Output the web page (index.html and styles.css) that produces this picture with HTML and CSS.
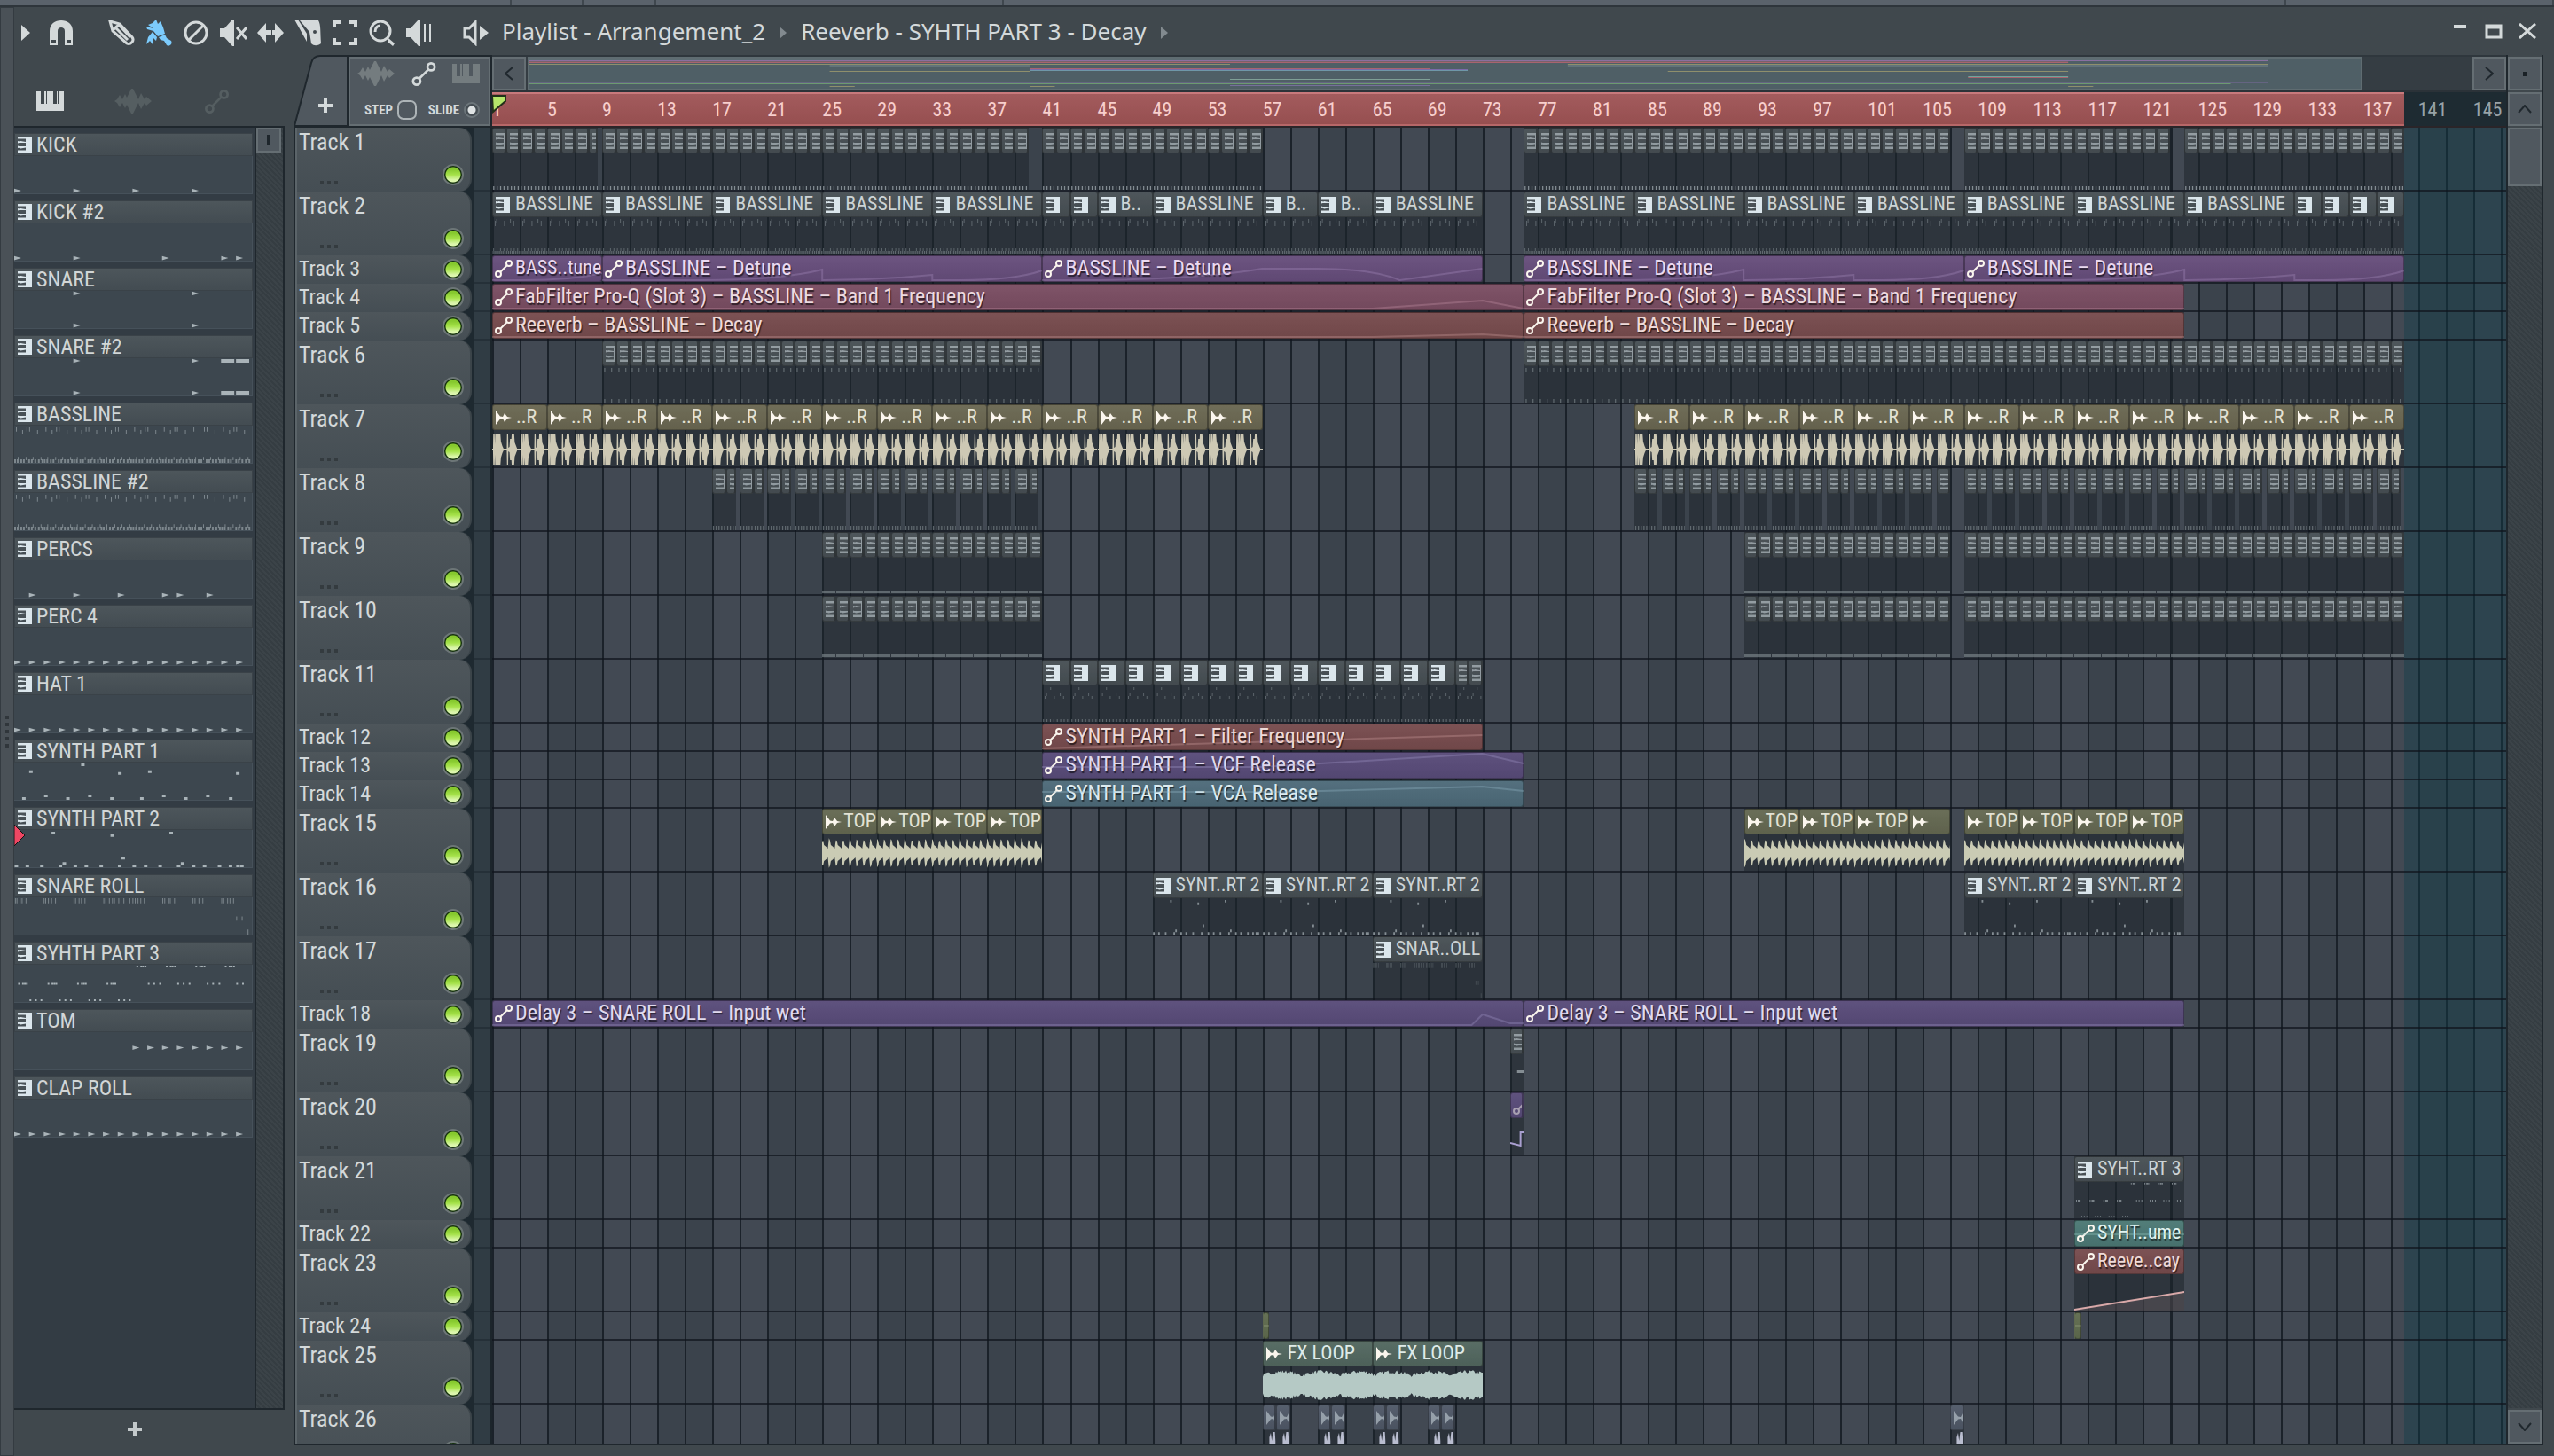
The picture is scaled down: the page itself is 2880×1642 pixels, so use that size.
FILE: index.html
```html
<!DOCTYPE html>
<html lang="en">
<head>
  <meta charset="UTF-8" />
  <meta name="viewport" content="width=device-width, initial-scale=1.0" />
  <title>Playlist - Arrangement_2</title>
  <link rel="stylesheet" href="styles.css">
</head>
<body>

  <!-- shared icons -->
  <svg class="defs" aria-hidden="true">
    <symbol id="i-keys" viewBox="0 0 16 18">
      <path d="M0 0H16V18H0V15.500H9V12.500L3 13.500L0 11.500V11H9V7H0V6.500L3 5.500V5L9 6V2.500H0Z" />
      <path d="M0 5L5 6L0 7.500ZM0 10.500L5 12L0 13Z" />
    </symbol>
    <symbol id="i-piano" viewBox="0 0 31 22">
      <path d="M0 0H5V14H9V0H11V14H12V0H19V14H23V0H24V14H25V0H31V22H0Z" />
    </symbol>
    <symbol id="i-auto" viewBox="0 0 20 20">
      <path class="ln" d="M6 14L14 6" />
      <circle class="ln" cx="4" cy="16" r="3" />
      <circle class="ln" cx="16" cy="4" r="3" />
    </symbol>
    <symbol id="i-audio" viewBox="0 0 18 16">
      <path d="M0 0L5 6.500L8 7L10 3L13 7L18 8L13 9L10 13L8 9L5 9.500L0 16Z" />
    </symbol>
    <symbol id="i-wave" viewBox="0 0 42 28">
      <path d="M0 14L3 12L6 7L9 12L12 6L14 10L19 0H21L24 6L27 12L30 5L34 12L36 9L42 14L36 19L34 16L30 23L27 16L24 22L21 28H19L14 18L12 22L9 16L6 21L3 16Z" />
    </symbol>
  </svg>

  <div class="strip"><i></i><i></i><i></i><i></i><i></i><i></i></div>

  <div class="window">
    <div class="edge"><span></span></div>

    <main class="main">
      <header class="toolbar">
        <button class="tb small" aria-label="Menu"><svg viewBox="0 0 10 18" width="10" height="18"><path d="M0 0L10 9L0 18Z" /></svg></button>
        <button class="tb" aria-label="Snap"><svg viewBox="0 0 28 30" width="28" height="30"><path d="M1 29V13C1 5 7 1 14 1S27 5 27 13V29H18V13C18 10 16 9 14 9S10 10 10 13V29Z" /><path class="dark" d="M3 23H8V27H3ZM20 23H25V27H20Z" /></svg></button>
        <div class="tools">
          <button class="tb" aria-label="Draw"><svg viewBox="0 0 30 30" width="30" height="30"><path class="st" d="M2 2L13 5L27 20C30 24 25 29 21 27L5 13Z M12 6L25 20 M8 9L22 23 M5 12L12 6" /></svg></button>
          <button class="tb active" aria-label="Paint"><svg viewBox="0 0 30 30" width="30" height="30"><path d="M8 4L12 0L14 5L17 2L20 9L22 16L14 19L9 13L2 11L1 8L9 10L3 6Z M8 14L13 20L12 24L9 21L8 28L5 24L1 28L3 20Z M15 20L22 17L24 21L29 24C31 28 27 31 24 29L21 24L17 23Z" /></svg></button>
          <button class="tb" aria-label="Delete"><svg viewBox="0 0 30 30" width="30" height="30"><circle class="st" cx="15" cy="15" r="12" /><path class="st" d="M7 23L23 7" /></svg></button>
          <button class="tb" aria-label="Mute"><svg viewBox="0 0 32 30" width="32" height="30"><path d="M1 10H6L15 0H17V30H15L6 20H1Z" /><path class="st" d="M20 9L31 22M31 9L20 22" /></svg></button>
          <button class="tb" aria-label="Slip"><svg viewBox="0 0 30 26" width="30" height="26"><path d="M0 13L10 2V10H14V16H10V24Z M30 13L20 2V10H16V16H20V24Z M13 10H17V16H13Z" /></svg></button>
          <button class="tb" aria-label="Slice"><svg viewBox="0 0 30 30" width="30" height="30"><path d="M0 0H4L14 16V25Z M6 1H27C30 6 29 14 30 27C26 30 22 30 19 27L17 14Z" /><circle class="dark" cx="23" cy="14" r="2" /></svg></button>
          <button class="tb" aria-label="Select"><svg viewBox="0 0 28 30" width="28" height="30"><path class="st thick" d="M2 9V3H9M19 3H26V9M26 21V27H19M9 27H2V21" /></svg></button>
          <button class="tb" aria-label="Zoom"><svg viewBox="0 0 30 30" width="30" height="30"><circle class="st" cx="13" cy="13" r="11" /><path class="st" d="M7 14C7 9 10 7 13 7" /><path d="M22 21L29 27L27 30L21 25Z" /></svg></button>
          <button class="tb" aria-label="Playback"><svg viewBox="0 0 30 30" width="30" height="30"><path d="M0 10H5L14 0H16V30H14L5 20H0Z M20 5H22V25H20Z M26 5H28V25H26Z" /></svg></button>
        </div>
        <button class="tb" aria-label="Preview"><svg viewBox="0 0 30 30" width="30" height="30"><path class="st" d="M2 10H7L14 3V27L7 20H2Z" /><path d="M19 7L29 15L19 23Z" /></svg></button>
        <nav class="crumbs">
          <button>Playlist - Arrangement_2</button>
          <svg viewBox="0 0 8 14" width="8" height="14"><path d="M0 0L8 7L0 14Z" /></svg>
          <button>Reeverb - SYHTH PART 3 - Decay</button>
          <svg viewBox="0 0 8 14" width="8" height="14"><path d="M0 0L8 7L0 14Z" /></svg>
        </nav>
        <div class="winbtns">
          <button aria-label="Minimize"><svg viewBox="0 0 20 18" width="20" height="18"><path d="M3 2H17V6H3Z" /></svg></button>
          <button aria-label="Maximize"><svg viewBox="0 0 20 18" width="20" height="18"><path class="st" d="M2 3H18V16H2ZM2 5H18" /></svg></button>
          <button aria-label="Close"><svg viewBox="0 0 20 18" width="20" height="18"><path class="st" d="M1 1L19 17M19 1L1 17" /></svg></button>
        </div>
      </header>

      <div class="content">
        <aside class="browser">
          <div class="tabs">
            <button class="on" aria-label="Patterns"><svg width="31" height="22"><use href="#i-piano" /></svg></button>
            <button aria-label="Audio"><svg width="42" height="28"><use href="#i-wave" /></svg></button>
            <button aria-label="Automation"><svg width="33" height="27"><use href="#i-auto" /></svg></button>
          </div>
          <div class="picker">
            <div class="patterns" id="patterns"></div>
            <div class="bar"><button aria-label="Scroll"><i></i></button></div>
          </div>
          <button class="add" aria-label="Add pattern"><svg viewBox="0 0 16 16" width="16" height="16"><path d="M6 0H10V6H16V10H10V16H6V10H0V6H6Z" /></svg></button>
        </aside>

        <section class="playlist">
          <div class="left">
            <div class="corner">
              <button class="newtrack" aria-label="Add track">
                <svg class="shape" viewBox="0 0 62 80" preserveAspectRatio="none"><path d="M1 80L20 9Q22 1 30 1H61V80Z" /></svg>
                <svg class="plus" viewBox="0 0 16 16" width="16" height="16"><path d="M6 0H10V6H16V10H10V16H6V10H0V6H6Z" /></svg>
              </button>
              <div class="options">
                <div class="kinds">
                  <button aria-label="Audio clips"><svg width="42" height="28"><use href="#i-wave" /></svg></button>
                  <button class="on" aria-label="Automation clips"><svg width="32" height="27"><use href="#i-auto" /></svg></button>
                  <button aria-label="Pattern clips"><svg width="31" height="22"><use href="#i-piano" /></svg></button>
                </div>
                <div class="flags">
                  <label>STEP<input type="checkbox" class="step"></label>
                  <label>SLIDE<input type="radio" class="slide" checked></label>
                </div>
              </div>
            </div>
            <div class="tracks" id="tracks"></div>
          </div>

          <div class="center">
            <div class="overview">
              <button class="nav" aria-label="Scroll left"><svg viewBox="0 0 10 16" width="10" height="16"><path class="st" d="M9 1L1 8L9 15" /></svg></button>
              <div class="map" id="map"></div>
              <div class="rest"></div>
              <button class="nav" aria-label="Scroll right"><svg viewBox="0 0 10 16" width="10" height="16"><path class="st" d="M1 1L9 8L1 15" /></svg></button>
            </div>
            <div class="ruler" id="ruler"></div>
            <div class="lanes" id="lanes"></div>
          </div>

          <div class="right">
            <button class="nav dot" aria-label="Menu"><i></i></button>
            <button class="nav" aria-label="Scroll up"><svg viewBox="0 0 16 10" width="16" height="10"><path class="st" d="M1 9L8 1L15 9" /></svg></button>
            <div class="vbar"><div class="thumb"></div></div>
            <button class="nav" aria-label="Scroll down"><svg viewBox="0 0 16 10" width="16" height="10"><path class="st" d="M1 1L8 9L15 1" /></svg></button>
          </div>
        </section>
      </div>
    </main>
  </div>

  <script src="script.js"></script>
</body>
</html>
```

FILE: styles.css
```css
:root {
  --fondo: #40484d;
  --panel: #50585f;
  --panel-line: #656e73;
  --dark: #1f272d;
  --text: #d4d9da;
  --font: "Roboto Condensed", "Liberation Sans Narrow", "Noto Sans", sans-serif;
  --bars: 146.4;
}

* {
  margin: 0;
  padding: 0;
  box-sizing: border-box;
}

body {
  background: var(--fondo);
  color: var(--text);
  font-family: var(--font);
  height: 100vh;
  display: flex;
  flex-direction: column;
  overflow: hidden;
}

button {
  background: none;
  border: none;
  color: inherit;
  font: inherit;
  display: flex;
  align-items: center;
  justify-content: center;
}

svg {
  display: block;
  fill: currentColor;
}

.defs {
  position: absolute;
  width: 0;
  height: 0;
}

.st, .ln {
  fill: none;
  stroke: currentColor;
  stroke-width: 3;
}

.ln { stroke-width: 2; }
.thick { stroke-width: 4; }
.dark { fill: var(--fondo); }

/* top strip */
.strip {
  height: 8px;
  background: #5a626b;
  border-bottom: 2px solid #2e353b;
  display: flex;
  flex: none;
}

.strip i { border-right: 2px solid #3f474e; }
.strip i:nth-child(1) { flex: 577; }
.strip i:nth-child(2) { flex: 80; }
.strip i:nth-child(3) { flex: 80; }
.strip i:nth-child(4) { flex: 392; }
.strip i:nth-child(5) { flex: 1450; }
.strip i:nth-child(6) { flex: 301; }

.window {
  flex: 1;
  display: flex;
  min-height: 0;
}

.edge {
  width: 16px;
  background: #4a5157;
  border: 1px solid #343b41;
  display: flex;
  align-items: center;
  justify-content: center;
}

.edge span {
  width: 4px;
  height: 36px;
  background: repeating-linear-gradient(#30363b 0 4px, transparent 4px 8px);
}

.main {
  flex: 1;
  min-width: 0;
  display: flex;
  flex-direction: column;
}

/* toolbar */
.toolbar {
  height: 54px;
  flex: none;
  display: flex;
  align-items: center;
}

.tb { width: 42px; height: 40px; margin-top: 3px; }
.tb.small { width: 32px; padding-right: 6px; }
.tb.active { color: #7ccbfc; }
.tools { display: flex; margin: 0 22px 0 26px; }

.crumbs {
  display: flex;
  align-items: center;
  gap: 16px;
  margin-left: 8px;
  font-family: "Noto Sans", sans-serif;
  font-size: 26px;
  line-height: 32px;
}

.crumbs svg { color: #828a8f; margin-top: 3px; }

.winbtns {
  margin-left: auto;
  margin-right: 20px;
  display: flex;
  gap: 18px;
}

.content {
  flex: 1;
  display: flex;
  min-height: 0;
}

/* pattern picker */
.browser {
  width: 305px;
  margin-right: 10px;
  padding-bottom: 8px;
  display: flex;
  flex-direction: column;
}

.tabs {
  height: 80px;
  display: flex;
  align-items: center;
  padding: 24px 60px 0 25px;
  justify-content: space-between;
  color: #555e61;
}

.tabs .on, .kinds .on { color: var(--text); }

.picker {
  flex: 1;
  min-height: 0;
  display: flex;
  border: 2px solid var(--dark);
  border-left: none;
  background: #333c44;
}

.patterns {
  flex: 1;
  min-width: 0;
  display: flex;
  flex-direction: column;
  gap: 6px;
  padding: 6px 2px 0 0;
  border-right: 2px solid var(--dark);
}

.pattern {
  height: 70px;
  position: relative;
}

.pattern h3 {
  height: 26px;
  background: linear-gradient(#4d565b, #434c52);
  border: 1px solid #3a4248;
  font-size: 24px;
  line-height: 20px;
  font-weight: normal;
  display: flex;
  align-items: center;
  gap: 5px;
  padding-left: 3px;
  color: #d2d6d6;
}

.pattern h3 svg, .clip h4 svg { flex: none; }
.pattern h3 svg { color: #dbe6ec; }

.preview {
  width: 100%;
  height: 43px;
  background: #3d474f;
  border-bottom: 1px solid #46515a;
  border-right: 1px solid #46515a;
  color: #a9b3b8;
}

.pattern .mark {
  position: absolute;
  left: 0;
  top: 20px;
  color: #ee4763;
}

.bar {
  width: 30px;
  background: repeating-linear-gradient(45deg, #3b4348 0 2px, #353d42 2px 4px);
}

.bar button {
  width: 28px;
  height: 28px;
  background: var(--panel);
  border: 2px solid var(--panel-line);
}

.bar i { width: 4px; height: 12px; background: #1e262c; }
.add { width: 271px; height: 44px; color: #c3c9cb; }

/* playlist */
.playlist {
  flex: 1;
  min-width: 0;
  margin: 0 12px 12px 0;
  display: flex;
}

.left {
  width: 224px;
  display: flex;
  flex-direction: column;
  border-bottom: 2px solid var(--dark);
}

.corner {
  height: 82px;
  flex: none;
  display: flex;
  border-bottom: 2px solid var(--dark);
}

.newtrack {
  width: 62px;
  position: relative;
}

.newtrack .shape {
  position: absolute;
  width: 100%;
  height: 100%;
  fill: var(--panel);
  stroke: var(--dark);
  stroke-width: 2;
}

.newtrack .plus { position: relative; margin: 34px 0 0 10px; }

.options {
  flex: 1;
  margin-top: 2px;
  background: var(--panel);
  border: 2px solid var(--panel-line);
  outline: 2px solid var(--dark);
  margin-right: 2px;
  padding: 3px 10px 0 8px;
}

.kinds {
  display: flex;
  align-items: center;
  justify-content: space-between;
  color: #747c7f;
}

.flags {
  display: flex;
  justify-content: space-between;
  padding-left: 8px;
  margin-top: 16px;
  font-size: 15px;
  font-weight: bold;
}

.flags label { display: flex; align-items: center; gap: 5px; }
.flags input { appearance: none; }

.step {
  width: 22px;
  height: 22px;
  border: 2px solid #adb4b7;
  border-radius: 7px;
}

.slide {
  width: 18px;
  height: 18px;
  border-radius: 50%;
  border: 2px solid #6c757a;
  background: radial-gradient(#dfe3e4 0 4px, #454d53 5px);
}

.tracks {
  flex: 1;
  min-height: 0;
  overflow: hidden;
  background: #1e2930;
  border-left: 2px solid var(--dark);
}

.track {
  height: 72px;
  display: flex;
}

.track.low { height: 32px; }

.head {
  flex: 1;
  position: relative;
  display: flex;
  justify-content: space-between;
  background: linear-gradient(#4e565b, #454e54);
  border-left: 2px solid #5b6469;
  border-right: 2px solid #3b4449;
  border-radius: 0 14px 14px 0;
  padding: 0 7px 0 2px;
  font-size: 26px;
  line-height: 32px;
}

.low .head { font-size: 24px; line-height: 30px; }

.track .gutter {
  width: 19px;
  margin-left: 2px;
  background: #303c44;
  border-bottom: 2px solid #253038;
}

.track::after {
  content: "";
  width: 2px;
  background: #1c252b;
}

.head input {
  appearance: none;
  width: 24px;
  height: 24px;
  margin-top: 41px;
  border-radius: 50%;
  border: 2px solid #6d7677;
  background: radial-gradient(circle at 50% 50%, transparent 0 8px, #14300c 9px),
    linear-gradient(#86c92e 20%, #a5e24a 50%, #dcf6ad 80%);
}

.low .head input { margin-top: 4px; }

.head .more {
  position: absolute;
  left: 26px;
  bottom: 8px;
  width: 20px;
  height: 4px;
  background: repeating-linear-gradient(90deg, #343b3f 0 4px, transparent 4px 8px);
}

.low .more { display: none; }

.center {
  flex: 1;
  min-width: 0;
  display: flex;
  flex-direction: column;
  border-bottom: 2px solid var(--dark);
}

.overview {
  height: 42px;
  flex: none;
  border-top: 2px solid #2f373d;
  border-bottom: 2px solid #2b3238;
  display: flex;
  background: #353d43;
}

.nav {
  width: 38px;
  height: 38px;
  flex: none;
  background: var(--panel);
  border: 2px solid var(--panel-line);
  color: #20282e;
}

.nav .st { stroke-width: 2; }

.map {
  flex: 2069;
  margin-left: 2px;
  background: #4f5f66;
  border: 2px solid #5f6c71;
}

.map svg { width: 100%; height: 100%; }
.rest { flex: 124; }

.ruler {
  height: 40px;
  flex: none;
  position: relative;
  overflow: hidden;
  background: #1e2b32;
  border-bottom: 2px solid #2a2529;
  font-size: 22px;
  line-height: 40px;
  color: #98a3a8;
}

.song {
  position: absolute;
  left: 0;
  top: 0;
  bottom: 0;
  background: linear-gradient(#a35b5d, #964f50);
  border-top: 2px solid #c8797c;
  border-bottom: 2px solid #b76768;
}

.ruler span { position: absolute; top: 0; }
.ruler .in { color: #f8cfcd; }

.playhead {
  position: absolute;
  left: 0;
  top: 3px;
  color: #b5e66a;
}

.lanes {
  flex: 1;
  min-height: 0;
  position: relative;
  overflow: hidden;
  --bar: calc(100% / var(--bars));
  background:
    repeating-linear-gradient(90deg, #1b222a 0 2px, transparent 2px calc(2 * var(--bar))),
    repeating-linear-gradient(90deg, #424953 0 calc(4 * var(--bar)), #3b434c calc(4 * var(--bar)) calc(8 * var(--bar)));
}

.outside {
  position: absolute;
  top: 0;
  bottom: 0;
  right: 0;
  background: rgba(16, 62, 76, 0.4);
}

.lane {
  height: 72px;
  position: relative;
  border-bottom: 2px solid rgba(16, 20, 28, 0.7);
}

.lane.low { height: 32px; }

.clip {
  position: absolute;
  top: 0;
  bottom: 0;
  overflow: hidden;
  background: rgba(30, 38, 44, 0.56);
  --tint: #474f54;
  --ink: #ccd3d5;
}

.clip h4 {
  height: 29px;
  padding-left: 3px;
  display: flex;
  align-items: center;
  gap: 6px;
  overflow: hidden;
  background: var(--tint);
  background-image: linear-gradient(rgba(255, 255, 255, 0.04), rgba(0, 0, 0, 0.06));
  border: 1px solid rgba(0, 0, 0, 0.3);
  border-radius: 3px;
  font-size: 22px;
  line-height: 24px;
  font-weight: normal;
  white-space: nowrap;
  color: var(--ink);
}

.clip h4 span { margin-top: -2px; }
.clip h4 svg { color: #dbe6ec; }
.clip.auto h4 svg, .khaki h4 svg, .olive h4 svg, .green h4 svg { color: #fbf6ee; }
.clip.auto h4 { gap: 3px; padding-left: 2px; text-shadow: 1px 2px 1px rgba(0, 0, 0, 0.6); }
.clip.long h4 { font-size: 24px; }
.clip.khaki h4, .clip.olive h4 { gap: 2px; }
.clip.khaki h4 { gap: 5px; }
.clip.tiny h4 { border-right-width: 2px; }
.clip.tiny h4 svg { opacity: 0.5; }
.low .clip h4 { height: 30px; }

.clip .shape { width: 100%; height: 41px; color: var(--wave, #848d93); }

.low .clip .shape {
  position: absolute;
  left: 0;
  top: 0;
  height: 30px;
  opacity: 0.3;
}

.curve { fill: none; stroke: var(--wave); stroke-width: 2; vector-effect: non-scaling-stroke; }

.purple { --tint: #664d7b; --wave: #b095c8; --ink: #ead9f0; }
.rose { --tint: #7a4d62; --wave: #d09cb0; --ink: #eddae0; }
.brick { --tint: #774b4d; --wave: #d9a9a9; --ink: #eedad8; }
.violet { --tint: #584b79; --wave: #a99fd0; --ink: #e0daee; }
.blue { --tint: #4d6a79; --wave: #9cc0d0; --ink: #dcebf0; }
.teal { --tint: #4b7874; --wave: #9cd0ca; --ink: #e2f5f2; }
.khaki { --tint: #6a6751; --wave: #cdc8b4; --ink: #e4e2d4; }
.olive { --tint: #646851; --wave: #cacbb4; --ink: #e2e2d4; }
.moss { --tint: #5f6b4e; --wave: #9fac88; --ink: #9fac88; }
.green { --tint: #52675f; --wave: #b5c9c5; --ink: #dfebe8; }
.slate { --tint: #4f5867; --wave: #b9bdcf; --ink: #d0d4df; }

.right {
  width: 42px;
  padding: 2px 0 0;
  display: flex;
  flex-direction: column;
  border: 2px solid var(--dark);
  border-top: none;
  gap: 2px;
}

.dot i { width: 4px; height: 5px; background: #1a2126; }

.vbar {
  flex: 1;
  background: repeating-linear-gradient(45deg, #3b4348 0 2px, #353d42 2px 4px);
}

.thumb {
  height: 66px;
  background: var(--panel);
  border: 2px solid var(--panel-line);
}
```

FILE: script.js
```js
const BARS = 146.4;
const SONG = 139;
const pct = n => (n / BARS * 100) + "%";
const range = (a, b, s = 1) => { const r = []; for (let i = a; i < b; i += s) r.push(i); return r; };
let seed = 7;
const rnd = () => (seed = (seed * 16807) % 2147483647) / 2147483647;

const icon = (id, w, h) => `<svg width="${w}" height="${h}"><use href="#${id}" /></svg>`;
const KEYS = icon("i-keys", 16, 18);
const AUTO = icon("i-auto", 20, 20);
const AUDIO = icon("i-audio", 18, 16);

/* ---------- pattern picker ---------- */
const STEP = 16.8;
const tri = (steps, y) => steps.map(s => `M${s * STEP} ${y - 2.5}l8 2.5l-8 2.5z`).join("");
const box = (xs, y, w = 4, h = 3) => xs.map(x => `M${x} ${y}h${w}v${h}h${-w}z`).join("");
const z = xs => xs.map(x => (x - 36) / 2.24);
const rep = (xs, n, d) => range(0, n).flatMap(i => xs.map(x => x + i * d));
const all = range(0, 16);

const bassNotes = box(rep([2, 14, 17], 8, 33.6), 2, 1, 5) + box(rep([9, 26], 8, 33.6), 5, 1, 5)
  + box(rep([4, 13, 21, 30], 8, 33.6), 36, 1, 4) + box(rep([0, 3, 7, 10, 16, 19, 23, 27, 31], 8, 33.6), 39, 2, 4);
const part2 = box(z([131, 431]), 2) + box(z([281]), 5) + box(z([309]), 31) + box(z([159, 460]), 37)
  + box(z([37, 65, 102, 149, 187, 215, 253, 300, 337, 366, 403, 450, 488, 516, 554, 582, 601, 611]), 40);
const roll = box(z([38, 42, 50, 55, 65, 111, 115, 122, 130, 140, 187, 191, 200, 206, 215, 263, 268, 277, 285, 290, 301, 314, 329, 337, 343, 350, 357, 366, 413, 418, 428, 432, 443, 490, 495, 505, 515, 563, 568, 578, 584, 593]), 1, 1, 6)
  + box(z([601, 615]), 22, 1, 5) + box(z([630]), 37, 1, 6);
const part3 = box(z(rep([347, 357, 362, 368], 4, 75)), 1, 2, 2) + box(z(rep([46, 56, 61, 66], 4, 75)), 21, 2, 2)
  + box(z([376, 390, 405, 451, 465, 480, 526, 540, 556, 601, 616]), 21, 2, 2) + box(z(rep([75, 89, 103], 4, 75)), 40, 2, 2);

const patterns = [
  ["KICK", tri([0, 4, 8, 12], 40)],
  ["KICK #2", tri([0, 4, 10, 14, 15], 40)],
  ["SNARE", tri([4, 12], 3) + tri([4, 12], 40)],
  ["SNARE #2", tri([4, 12], 3) + tri([4, 12], 40) + box([235, 252], 1, 15, 4) + box([235, 252], 38, 15, 4)],
  ["BASSLINE", bassNotes],
  ["BASSLINE #2", bassNotes],
  ["PERCS", tri([1, 4, 7, 10, 11, 13], 40)],
  ["PERC 4", tri(all, 40)],
  ["HAT 1", tri(all, 40)],
  ["SYNTH PART 1", box([76], 1) + box([17, 152], 9) + box([118, 252], 11) + box([34, 84, 168, 218], 37) + box([9, 59, 109, 143, 193, 244], 40)],
  ["SYNTH PART 2", part2],
  ["SNARE ROLL", roll],
  ["SYHTH PART 3", part3],
  ["TOM", tri(range(8, 16), 18)],
  ["CLAP ROLL", tri(all, 40)]
];

document.getElementById("patterns").innerHTML = patterns.map(([name, d]) => `
  <div class="pattern"><h3>${KEYS}${name}</h3>
    <svg class="preview" viewBox="0 0 270 43" preserveAspectRatio="none"><path d="${d}" ${/BASS|ROLL/.test(name) && name[0] !== "C" ? 'opacity=".6"' : ""} /></svg>
    ${name === "SYNTH PART 2" ? '<svg class="mark" viewBox="0 0 13 24" width="13" height="24"><path d="M0 0L12 12L0 24Z" stroke="#1a1013" /></svg>' : ""}
  </div>`).join("");

/* ---------- clip drawings, 100 units per bar ---------- */
const ticks = (len, per, y, h, w = 8) => range(0, Math.round(len * per)).map(i => `M${(i + 0.3) * 100 / per} ${y}h${w}v${h}h${-w}z`).join("");
const svg = (len, inner, h = 41) => `<svg class="shape" viewBox="0 0 ${len * 100} ${h}" preserveAspectRatio="none">${inner}</svg>`;
const path = d => `<path d="${d}" />`;
const faint = d => `<path d="${d}" opacity=".6" />`;
const mirror = (pts, c) => "M" + pts.map(([x, y]) => `${x} ${c - y}`).join("L") + "L" + pts.slice().reverse().map(([x, y]) => `${x} ${c + y}`).join("L") + "Z";

const draw = {
  kick: n => svg(n, path(ticks(n, 4, 37, 4))),
  bass: n => svg(n, faint(ticks(n, 1, 2, 5, 6) + ticks(n, 1.5, 4, 6, 6) + ticks(n, 4, 35, 3, 6) + ticks(n, 8, 38, 3, 7))),
  hat: n => svg(n, faint(ticks(n, 2, 2, 4) + ticks(n, 2, 37, 4))),
  perc: n => svg(n, faint(ticks(n, 5, 36, 5))),
  line: n => svg(n, faint(`M0 37H${n * 100 - 3}V40H0Z`)),
  synth1: n => svg(n, faint(ticks(n, 0.5, 2, 3, 6) + ticks(n, 1, 9, 3, 6) + ticks(n, 1.5, 12, 3, 6) + ticks(n, 4, 38, 3, 7))),
  synth2: n => svg(2.7, path(part2), 43),
  roll: n => svg(2.7, faint(roll), 43),
  synth3: n => svg(2.7, path(part3), 43),
  /* two hits per pair of bars: a rolled one, then a clean one */
  loop: n => svg(n, path("M0 21H" + n * 100 + "V23H0Z") + path(range(0, n).map(i => {
    const p = i % 2
      ? [[6, 0], [8, 17], [16, 17], [18, 2], [26, 3], [30, 12], [40, 12], [42, 17], [60, 17], [64, 8], [74, 4], [84, 0]]
      : [[6, 0], [8, 17], [18, 17], [20, 6], [22, 17], [34, 17], [36, 9], [38, 17], [60, 17], [64, 9], [74, 4], [86, 0]];
    return mirror(p.map(([x, y]) => [i * 100 + x, y]), 22);
  }).join(""))),
  top: n => svg(n, path(mirror(range(0, n * 2).flatMap(i => [[i * 50, 13 + rnd() * 4], [i * 50 + 8, 14], [i * 50 + 14, 9], [i * 50 + 30, 7], [i * 50 + 42, 5]]).concat([[n * 100, 12]]), 21))),
  fx: n => svg(n, path(mirror(range(0, n * 100 + 1, 8).map(x => [x, 9 + Math.abs(Math.sin(x / 90)) * 4 + rnd() * 4]), 21))),
  hit: n => svg(n, path("M48 41V8L58 3L66 12L74 2H88L92 12V41Z")),
  note: n => svg(n, path("M50 18H100V21H50Z")),
  step: n => svg(n, '<path class="curve" d="M0 28L75 31V16H100" />'),
  ramp: n => svg(n, `<path d="M0 40L${n * 100} 20V41H0Z" opacity=".15" /><path class="curve" d="M0 40L${n * 100} 20" />`)
};
const curve = d => n => svg(n, `<path class="curve" d="${d}" />`, 30);
const flat = curve("M0 28H9000");

const detuneA = curve("M0 28H700Q1300 28 1600 16V28Q2000 28 2400 22V28H2600Q3000 28 3200 17");
const detuneB = curve("M0 28H400Q1200 26 1600 15H2000Q2400 15 2600 28L3200 15");

/* ---------- tracks ---------- */
const clips = (starts, len, o) => starts.map(s => ({ at: s, len, ...o }));
const mini = (a, b, d) => clips(range(a, b), 1, { icon: KEYS, tiny: 1, draw: d });
const key = (name, starts, len, d) => clips(starts, len, { name, icon: KEYS, draw: d });
const auto = (name, starts, len, tone, d = flat) => clips(starts, len, { name, icon: AUTO, tone: `auto ${len > 8 ? "long" : ""} ${tone}`, draw: d });
const wav = (name, starts, len, tone, d) => clips(starts, len, { name, icon: AUDIO, tone, draw: d });
const pairs = (a, b) => range(a, b, 2).flatMap(s => [
  ...mini(s, s + 1, draw.perc),
  ...(s + 1 < b ? clips([s + 1], 0.7, { icon: KEYS, tiny: 1, draw: draw.perc }) : [])
]);

const tracks = [
  { clips: [...mini(0, 7, draw.kick), ...clips([7], 0.7, { icon: KEYS, tiny: 1, draw: draw.kick }), ...mini(8, 39, draw.kick), ...mini(40, 56, draw.kick), ...mini(75, 106, draw.kick), ...mini(107, 122, draw.kick), ...mini(123, 139, draw.kick)] },
  { clips: [...key("BASSLINE", [...range(0, 40, 8), 48, 64, ...range(75, 131, 8)], 8, draw.bass), ...key("", [40, 42, 131, 133, 135, 137], 2, draw.bass), ...key("B..", [44, 56, 60], 4, draw.bass)] },
  { low: 1, clips: [...auto("BASS..tune", [0], 8, "purple", curve("M0 28H200Q600 28 800 20")), ...auto("BASSLINE – Detune", [8], 32, "purple", detuneA), ...auto("BASSLINE – Detune", [40], 32, "purple", detuneB), ...auto("BASSLINE – Detune", [75, 107], 32, "purple", detuneA)] },
  { low: 1, clips: [...auto("FabFilter Pro-Q (Slot 3) – BASSLINE – Band 1 Frequency", [0], 75, "rose", curve("M0 28H6400L7200 19L7500 28")), ...auto("FabFilter Pro-Q (Slot 3) – BASSLINE – Band 1 Frequency", [75], 48, "rose")] },
  { low: 1, clips: [...auto("Reeverb – BASSLINE – Decay", [0], 75, "brick", curve("M0 28H6400L7200 25L7500 28")), ...auto("Reeverb – BASSLINE – Decay", [75], 48, "brick")] },
  { clips: [...mini(8, 40, draw.hat), ...mini(75, 139, draw.hat)] },
  { clips: wav("..R", [...range(0, 56, 4), ...range(83, 139, 4)], 4, "khaki", draw.loop) },
  { clips: [...pairs(16, 40), ...pairs(83, 106), ...pairs(107, 139)] },
  { clips: [...mini(24, 40, draw.line), ...mini(91, 106, draw.line), ...mini(107, 139, draw.line)] },
  { clips: [...mini(24, 40, draw.line), ...mini(91, 106, draw.line), ...mini(107, 139, draw.line)] },
  { clips: [...key("", range(40, 70, 2), 2, draw.synth1), ...mini(70, 72, draw.synth1)] },
  { low: 1, clips: auto("SYNTH PART 1 – Filter Frequency", [40], 32, "brick", curve("M0 28L3200 13")) },
  { low: 1, clips: auto("SYNTH PART 1 – VCF Release", [40], 35, "violet", curve("M0 17H1600L3200 2L3500 13")) },
  { low: 1, clips: auto("SYNTH PART 1 – VCA Release", [40], 35, "blue", curve("M0 13H1800L3200 7L3500 12")) },
  { clips: [...wav("TOP", [...range(24, 40, 4), 91, 95, 99, ...range(107, 123, 4)], 4, "olive", draw.top), ...wav("", [103], 3, "olive", draw.top)] },
  { clips: key("SYNT..RT 2", [48, 56, 64, 107, 115], 8, draw.synth2) },
  { clips: key("SNAR..OLL", [64], 8, draw.roll) },
  { low: 1, clips: [...auto("Delay 3 – SNARE ROLL – Input wet", [0], 75, "violet", curve("M0 28H7120L7200 16L7400 26H7500")), ...auto("Delay 3 – SNARE ROLL – Input wet", [75], 48, "violet")] },
  { clips: mini(74, 75, draw.note) },
  { clips: clips([74], 1, { icon: AUTO, tone: "auto violet", tiny: 1, draw: draw.step }) },
  { clips: key("SYHT..RT 3", [115], 8, draw.synth3) },
  { low: 1, clips: auto("SYHT..ume", [115], 8, "teal", curve("M0 16H800")) },
  { clips: auto("Reeve..cay", [115], 8, "brick", draw.ramp) },
  { low: 1, clips: clips([56, 115], 0.5, { tone: "moss", draw: curve("M0 0V30M0 15H50") }) },
  { clips: wav("FX LOOP", [56, 64], 8, "green", draw.fx) },
  { clips: clips([56, 57, 60, 61, 64, 65, 68, 69, 106], 1, { icon: AUDIO, tone: "slate", tiny: 1, draw: draw.hit }) }
];

document.getElementById("tracks").innerHTML = tracks.map((t, i) => `
  <div class="track ${t.low ? "low" : ""}">
    <div class="head"><span>Track ${i + 1}</span><i class="more"></i><input type="checkbox" checked aria-label="Track ${i + 1} on"></div>
    <div class="gutter"></div>
  </div>`).join("");

document.getElementById("lanes").innerHTML = `<div class="outside" style="left:${pct(SONG)}"></div>` + tracks.map(t => `
  <div class="lane ${t.low ? "low" : ""}">${t.clips.map(c => `
    <div class="clip ${c.tone || ""} ${c.tiny ? "tiny" : ""}" style="left:${pct(c.at)};width:${pct(c.len)}">
      <h4>${c.icon || ""}${c.name ? `<span>${c.name}</span>` : ""}</h4>${c.draw(c.len)}</div>`).join("")}
  </div>`).join("");

/* ---------- ruler ---------- */
document.getElementById("ruler").innerHTML = `<div class="song" style="width:${pct(SONG)}"></div>`
  + range(0, 146, 4).map(b => `<span class="${b < SONG ? "in" : ""}" style="left:${pct(b)}">${b + 1}</span>`).join("")
  + '<svg class="playhead" viewBox="0 0 17 21" width="17" height="21"><path d="M0 1H15V7L1 19Z" stroke="#22301a" stroke-width="2" /></svg>';

/* ---------- overview ---------- */
const row = (a, b, y, h, c, o = 1) => `<rect x="${a}" y="${y}" width="${b - a}" height="${h}" fill="${c}" opacity="${o}" />`;
document.getElementById("map").innerHTML = `<svg viewBox="0 0 146.4 34" preserveAspectRatio="none">${[
  row(0, 139, 0, 2, "#6b7b80", .5), row(0, 139, 2, 1, "#8a70a0"), row(0, 123, 3.500, 1.500, "#a8646f"),
  row(0, 56, 6, 1, "#8f8f6c"), row(83, 139, 6, 1, "#8f8f6c"), row(24, 40, 7, 3, "#62737a"), row(83, 139, 7, 3, "#62737a"),
  row(24, 40, 14, 1, "#8f8f6c"), row(91, 123, 14, 1, "#8f8f6c"), row(40, 72, 11, 1, "#a8646f"), row(40, 75, 12, 1, "#7a6aa8"), row(40, 75, 13, 1, "#6f97a8"),
  row(0, 123, 17, 1, "#776f9c"), row(115, 123, 20, 1, "#6fa59c"), row(115, 123, 21, 1, "#a8646f"),
  row(56, 72, 23, 1, "#7fa096"), row(0, 139, 26, 1.500, "#7d6b9e"), row(0, 136, 28, 1, "#6c9a70"),
  row(24, 26, 31, 1, "#8f8f6c"), row(40, 42, 31, 1, "#8f8f6c"), row(123, 125, 31, 1, "#8f8f6c"), row(56, 72, 30, 1, "#776f9c")
].join("")}</svg>`;
```
